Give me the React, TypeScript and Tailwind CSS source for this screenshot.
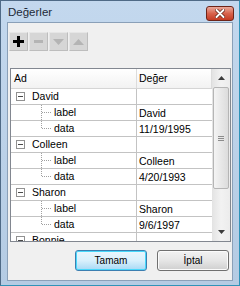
import React from 'react'

type Person = { name: string; date?: string }

const people: Person[] = [
  { name: 'David', date: '11/19/1995' },
  { name: 'Colleen', date: '4/20/1993' },
  { name: 'Sharon', date: '9/6/1997' },
  { name: 'Bonnie' },
]

const font = { fontFamily: '"Liberation Sans", Arial, sans-serif' }

function ToolButton({ children }: { children: React.ReactNode }) {
  return (
    <div className="flex h-[19px] w-[19px] items-center justify-center border border-t-[#e6e6e6] border-l-[#e6e6e6] border-r-[#bdbdbd] border-b-[#bdbdbd] bg-[#d6d6d6]">
      {children}
    </div>
  )
}

function MinusBox() {
  return (
    <div className="flex h-[9px] w-[9px] items-center justify-center border border-[#919191] bg-white">
      <div className="h-px w-[5px] bg-[#4a4a4a]" />
    </div>
  )
}

function Connector({ last }: { last: boolean }) {
  return (
    <svg width="12" height="15" className="ml-[30px] shrink-0" shapeRendering="crispEdges">
      <line x1="0.5" y1="0" x2="0.5" y2={last ? 8 : 15} stroke="#a0a0a0" strokeDasharray="1 1" />
      <line x1="1" y1="7.5" x2="11" y2="7.5" stroke="#a0a0a0" strokeDasharray="1 1" />
    </svg>
  )
}

function Row({ first, value }: { first: React.ReactNode; value?: string }) {
  return (
    <div className="flex h-[16px] shrink-0 border-b border-[#c3c3c3]">
      <div className="flex w-[126px] shrink-0 items-center border-r border-[#c3c3c3]">{first}</div>
      <div className="flex flex-1 items-center pl-[2px] pt-px text-[10.5px] leading-none text-black">{value}</div>
    </div>
  )
}

export default function App() {
  return (
    <div
      className="flex h-[286px] w-[240px] flex-col border border-[#4f6a86] border-r-[#2f93b8] border-b-[#2f93b8] bg-gradient-to-b from-[#c3d8ee] to-[#b4cbe3]"
      style={font}
    >
      {/* title bar */}
      <div className="flex h-[21px] shrink-0 items-center justify-between pl-[7px] pr-[5px]">
        <span className="pt-[2px] text-[11.5px] text-[#1e2a38]">Değerler</span>
        <div className="mt-[3px] flex h-[15px] w-[28px] items-center justify-center rounded-[3px] border border-[#6e2418] bg-gradient-to-b from-[#e9a99c] via-[#d8624c] to-[#c43a22]">
          <svg width="10" height="9" viewBox="0 0 10 9">
            <path d="M1.5 1 L8.5 8 M8.5 1 L1.5 8" stroke="#5a1a10" strokeWidth="3.4" strokeLinecap="round" />
            <path d="M1.5 1 L8.5 8 M8.5 1 L1.5 8" stroke="#ffffff" strokeWidth="2" strokeLinecap="round" />
          </svg>
        </div>
      </div>

      {/* client area */}
      <div className="mx-[6px] mb-[4px] flex flex-1 flex-col border border-[#8aa0b8] bg-[#f0f0f0]">
        {/* toolbar */}
        <div className="ml-px mt-[9px] flex gap-px">
          <ToolButton>
            <svg width="11" height="11" viewBox="0 0 11 11">
              <path d="M4 0h3v4h4v3H7v4H4V7H0V4h4z" fill="#000" />
            </svg>
          </ToolButton>
          <ToolButton>
            <div className="h-[3px] w-[9px] bg-[#b4b4b4]" />
          </ToolButton>
          <ToolButton>
            <svg width="11" height="6" viewBox="0 0 11 6">
              <path d="M0 0h11L5.5 6z" fill="#b4b4b4" />
            </svg>
          </ToolButton>
          <ToolButton>
            <svg width="11" height="6" viewBox="0 0 11 6">
              <path d="M0 6h11L5.5 0z" fill="#b4b4b4" />
            </svg>
          </ToolButton>
        </div>

        {/* tree grid */}
        <div className="ml-[2px] mr-px mt-[17px] flex h-[174px] border border-[#828790] bg-white">
          <div className="flex flex-1 flex-col overflow-hidden">
            <div className="flex h-[20px] shrink-0 border-b border-[#d5d5d5] bg-gradient-to-b from-[#ffffff] to-[#f2f2f2] text-[10.5px] text-black">
              <div className="flex w-[126px] shrink-0 items-center border-r border-[#dcdcdc] pl-[3px]">Ad</div>
              <div className="flex flex-1 items-center border-r border-[#dcdcdc] pl-[2px]">Değer</div>
            </div>
            {people.map((p) => (
              <React.Fragment key={p.name}>
                <Row
                  first={
                    <div className="flex items-center pl-[5px] text-[10.5px] text-black">
                      <MinusBox />
                      <span className="ml-[7px]">{p.name}</span>
                    </div>
                  }
                />
                {p.date && (
                  <>
                    <Row
                      first={
                        <div className="flex items-center text-[10.5px] text-black">
                          <Connector last={false} />
                          <span className="ml-px">label</span>
                        </div>
                      }
                      value={p.name}
                    />
                    <Row
                      first={
                        <div className="flex items-center text-[10.5px] text-black">
                          <Connector last={true} />
                          <span className="ml-px">data</span>
                        </div>
                      }
                      value={p.date}
                    />
                  </>
                )}
              </React.Fragment>
            ))}
          </div>

          {/* scrollbar */}
          <div className="flex w-[18px] shrink-0 flex-col bg-gradient-to-r from-[#e3e3e3] via-[#f2f2f2] to-[#ececec]">
            <div className="flex h-[18px] shrink-0 items-center justify-center">
              <svg width="7" height="4" viewBox="0 0 7 4">
                <path d="M0 4h7L3.5 0z" fill="#3c3c3c" />
              </svg>
            </div>
            <div className="flex-1 px-px">
              <div className="flex h-[102px] items-center justify-center rounded-[2px] border border-[#b5b5b5] bg-gradient-to-r from-[#f4f4f4] to-[#dcdcdc]">
                <div className="flex flex-col gap-px">
                  <div className="h-px w-[6px] bg-[#8c8c8c]" />
                  <div className="h-px w-[6px] bg-[#8c8c8c]" />
                  <div className="h-px w-[6px] bg-[#8c8c8c]" />
                </div>
              </div>
            </div>
            <div className="flex h-[18px] shrink-0 items-center justify-center">
              <svg width="7" height="4" viewBox="0 0 7 4">
                <path d="M0 0h7L3.5 4z" fill="#3c3c3c" />
              </svg>
            </div>
          </div>
        </div>

        {/* dialog buttons */}
        <div className="mr-[3px] mt-[8px] flex justify-end gap-[10px] text-[10px] text-black">
          <button className="h-[21px] w-[72px] rounded-[3px] border border-[#3c7fb1] bg-gradient-to-b from-[#eaf6fd] via-[#d9f0fc] to-[#a7d9f5] shadow-[inset_0_0_0_1px_#48d8fb]">
            Tamam
          </button>
          <button className="h-[21px] w-[72px] rounded-[3px] border border-[#707070] bg-gradient-to-b from-[#f2f2f2] via-[#e6e6e6] to-[#cfcfcf] shadow-[inset_0_0_0_1px_#fbfbfb]">
            İptal
          </button>
        </div>
      </div>
    </div>
  )
}
